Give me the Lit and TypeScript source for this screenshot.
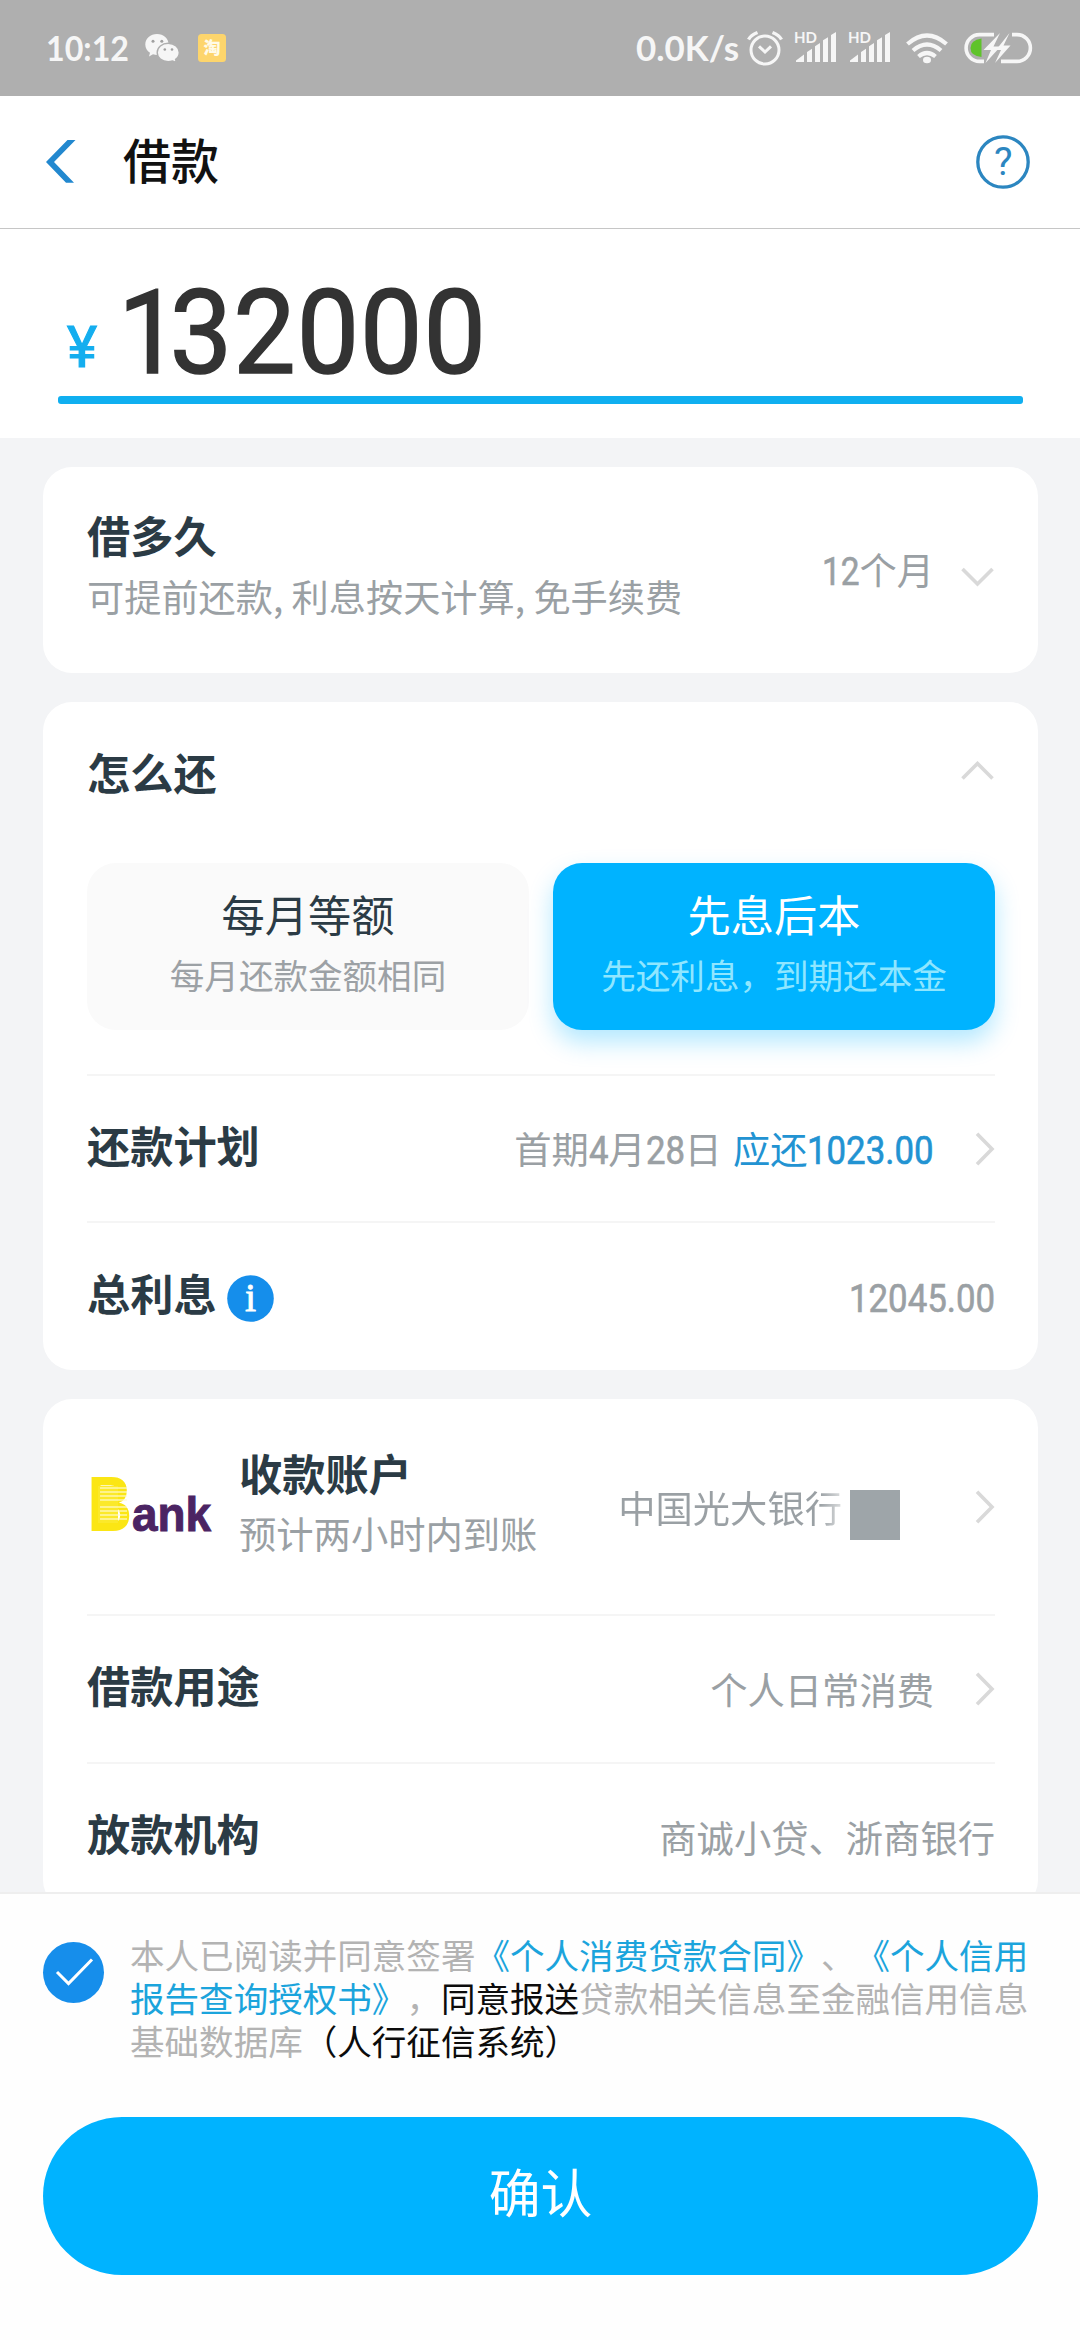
import { LitElement, html, svg, css } from "lit";
import { customElement, property } from "lit/decorators.js";

type Dir = "right" | "up" | "down";

@customElement("chevron-icon")
class ChevronIcon extends LitElement {
  @property() dir: Dir = "right";
  static styles = css`
    :host { display: block; flex: none; }
    svg { display: block; }
    path { fill: none; stroke: #d9d9d9; stroke-width: 3.6; }
  `;
  render() {
    if (this.dir === "right")
      return html`<svg width="20" height="34" viewBox="0 0 20 34"><path d="M2 1.8 L17 17 L2 32.2" /></svg>`;
    const d = this.dir === "down" ? "M1.5 2 L16.5 17 L31.5 2" : "M1.5 17.5 L16.5 2.5 L31.5 17.5";
    return html`<svg width="33" height="20" viewBox="0 0 33 20"><path d=${d} /></svg>`;
  }
}

/* Condensed figures that sit on the baseline of the surrounding text. */
@customElement("num-text")
class NumText extends LitElement {
  @property() value = "";
  @property({ type: Number }) size = 38;
  @property({ type: Number }) stretch = 0.915;
  static styles = css`
    :host { display: inline; }
    svg { display: inline-block; vertical-align: baseline; overflow: visible; }
    text {
      font-family: Roboto, "Liberation Sans", sans-serif; fill: currentColor;
      stroke: currentColor; stroke-width: 0.6;
    }
  `;
  render() {
    let em = 0;
    for (const c of this.value) em += c === "." ? 0.27 : 0.5615;
    const w = em * this.size * this.stretch;
    const h = Math.round(this.size * 0.711);
    return html`<svg width=${w} height=${h}>
      <text x="0" y=${h} font-size=${this.size}
        textLength=${w} lengthAdjust="spacingAndGlyphs">${this.value}</text></svg>`;
  }
}

@customElement("status-bar")
class StatusBar extends LitElement {
  static styles = css`
    :host {
      display: flex; height: 96px; box-sizing: border-box; padding: 0 46px 0 46px;
      background: #afafaf; align-items: center; justify-content: space-between;
    }
    .side { display: flex; align-items: center; }
    svg { display: block; flex: none; overflow: visible; }
    text { font-family: Lato, "Open Sans", sans-serif; fill: #f6f6f6; }
    .time { font-size: 35px; font-weight: 700; }
    .hd { font-size: 14.5px; font-weight: 700; }
    .tao { font-family: "Noto Sans CJK SC", sans-serif; font-size: 17px; font-weight: 900; fill: #fffbe8; }
    .fill { fill: #f6f6f6; }
    .line { fill: none; stroke: #f6f6f6; }
  `;
  signal() {
    return html`<svg width="54" height="96" viewBox="792 0 54 96">
      <text class="hd" x="794" y="42.5" textLength="23" lengthAdjust="spacingAndGlyphs">HD</text>
      <path class="fill" d="M796 62 V60.5 L804 54.5 V62Z M807 62 V52 L812 48.8 V62Z M815 62 V46.2 L820 43 V62Z
        M823 62 V40.3 L828 37.3 V62Z M831 62 V35 L836 32 V62Z" />
    </svg>`;
  }
  render() {
    return html`
      <div class="side">
        <svg width="98" height="96" viewBox="46 0 98 96">
          <text class="time" x="46" y="61" textLength="83" lengthAdjust="spacingAndGlyphs">10:12</text>
        </svg>
        <svg width="53" height="96" viewBox="144 0 53 96">
          <path class="fill" d="M157 34 C150.500 34 145.300 38.500 145.300 44.500 C145.300 48 147 50.800 150 52.800 L149 56.500
            L153 54.300 C154.500 54.800 155.700 55 157 55 C163.500 55 168.600 50.500 168.600 44.500 C168.600 38.500 163.500 34 157 34Z" />
          <path class="fill" stroke="#afafaf" stroke-width="1.4" d="M168.200 43.300 C174.400 43.300 179.300 47.300 179.300 52.600
            C179.300 55.500 177.800 57.800 175.600 59.400 L176.600 62.700 L172.600 61 C171.200 61.500 169.800 61.800 168.200 61.800
            C162 61.800 157.200 57.800 157.200 52.600 C157.200 47.300 162 43.300 168.200 43.300Z" />
          <g fill="#a0a0a0"><circle cx="153" cy="41.200" r="1.500" /><circle cx="161.800" cy="41.200" r="1.500" />
            <circle cx="164.800" cy="49.500" r="1.300" /><circle cx="172" cy="49.500" r="1.300" /></g>
        </svg>
        <svg width="30" height="96" viewBox="197 0 30 96">
          <rect x="198" y="34" width="28" height="28" rx="3.500" fill="#fdd56c" />
          <text class="tao" x="203.500" y="54">淘</text>
        </svg>
      </div>
      <div class="side">
        <svg width="108" height="96" viewBox="637 0 108 96">
          <text class="time" x="636" y="60.500" textLength="103" lengthAdjust="spacingAndGlyphs">0.0K/s</text>
        </svg>
        <svg width="47" height="96" viewBox="745 0 47 96">
          <circle class="line" cx="765" cy="50" r="14" stroke-width="3" />
          <path class="line" stroke-width="3" d="M759 46.300 L765 52 L771 46.300" />
          <path class="line" stroke-width="3.400" d="M748.500 39.500 Q751 35 757.500 32.500 M781.500 39.500 Q779 35 772.500 32.500" />
        </svg>
        ${this.signal()}${this.signal()}
        <svg width="134" height="96" viewBox="900 0 134 96">
          <g class="line" stroke-width="4.200">
            <path d="M907.500 44 Q927 27 946.500 44" /><path d="M913 50.500 Q927 38.500 941 50.500" />
            <path d="M918.500 56.500 Q927 49.500 935.500 56.500" />
          </g>
          <ellipse class="fill" cx="927" cy="60" rx="4" ry="3.200" />
          <path fill="#5fc32b" d="M981.500 38.500 V57 Q970.500 56 970.500 48 Q970.500 40 981.500 38.500Z" />
          <path class="line" stroke-width="3.600" d="M994 34.600 H979.500 A13.400 13.400 0 0 0 979.500 61.400 H984
            M1012 34.600 H1017 A13.400 13.400 0 0 1 1017 61.400 H1001" />
          <path class="fill" d="M1000 33 L983.500 50 H991 L985.500 63 L1000.500 46.500 H993.500Z" />
          <path class="fill" d="M1009.500 33 L996 50 H1001 L995 63 L1010.500 45.500 H1003.500Z" />
        </svg>
      </div>`;
  }
}

@customElement("bank-logo")
class BankLogo extends LitElement {
  static styles = css`
    :host { display: block; flex: none; width: 122px; }
    svg { display: block; overflow: visible; }
    text { font-family: "Liberation Sans", Arial, sans-serif; font-weight: 700; }
    .b { font-size: 77px; fill: #fbe614; }
    .ank { font-size: 49px; fill: #4b2463; stroke: #4b2463; stroke-width: 1; }
  `;
  render() {
    const lines = [10, 14, 18, 22, 29, 33, 37, 41];
    return html`<svg width="122" height="53" viewBox="0 0 122 53">
      <text class="b" x="-1.5" y="53" textLength="44.500" lengthAdjust="spacingAndGlyphs">B</text>
      <rect x="9" y="8" width="20" height="37" fill="#fbe92a" />
      ${lines.map((y) => svg`<path d=${`M11 ${y} H38`} stroke="#fffbd0" stroke-width="1.2" />`)}
      <text class="ank" x="43" y="53" textLength="79" lengthAdjust="spacingAndGlyphs">ank</text>
    </svg>`;
  }
}

@customElement("app-root")
class AppRoot extends LitElement {
  static styles = css`
    :host {
      display: flex; flex-direction: column; width: 1080px; height: 2340px; overflow: hidden;
      background: #f3f4f6; color: #2b3b45; text-spacing-trim: space-all;
      font-family: "Noto Sans CJK SC", "Noto Sans", sans-serif;
    }
    header {
      display: flex; align-items: center; height: 133px; flex: none; box-sizing: border-box;
      padding: 0 49px 0 45px; background: #fff; border-bottom: 1px solid #c6c6c6;
    }
    svg { display: block; flex: none; overflow: visible; }
    h1 { margin: -9px 0 0 47px; font-size: 48px; font-weight: 500; line-height: 70px; color: #111; flex: 1; }
    .q { font-family: Roboto, sans-serif; font-size: 39px; fill: #2c86c0; }

    .amount { height: 209px; flex: none; box-sizing: border-box; padding: 59px 57px 0 58px; background: #fff; }
    .figure { display: flex; align-items: flex-end; height: 108px; }
    .yen { margin: 0 13px 29px 9px; color: #14aeef; }
    .big { fill: #333; stroke: #333; stroke-width: 1.6; font-family: Roboto, sans-serif; font-size: 117px; }
    .yentext { fill: #14aeef; stroke: #14aeef; stroke-width: 1.2; font-family: Roboto, sans-serif; font-size: 57px; }
    .underline { height: 8px; border-radius: 3px; background: #10aff0; }

    main {
      height: 1454px; flex: none; box-sizing: border-box; overflow: hidden;
      padding: 29px 42px 0 43px; display: flex; flex-direction: column; gap: 29px;
    }
    .card { background: #fff; border-radius: 29px; padding: 0 43px 0 44px; flex: none; }
    .row { display: flex; align-items: center; justify-content: space-between; box-sizing: border-box; }
    .row + .row, .line { border-top: 2px solid #f5f5f5; }
    .label { font-size: 43.2px; font-weight: 700; line-height: 60px; color: #2b3b45; white-space: nowrap; }
    .note, .value { font-size: 37.3px; line-height: 48px; color: #9aa0a4; white-space: nowrap; font-weight: 400; }
    .note { margin-top: 7px; }
    .value { display: flex; align-items: center; }
    .value chevron-icon { margin-left: 41px; }
    .raise { margin-bottom: 10px; }
    .lift { margin-top: -1px; }

    .term { height: 206px; }
    .term .stack { margin-top: 4px; margin-bottom: 21px; }
    .term .note { margin-top: 8px; font-size: 37.2px; }
    .term .value { margin-top: -2px; }
    .term chevron-icon { margin: 16px 1px 0 27px; }
    .how { height: 137px; }
    .how chevron-icon { margin-right: 1px; }

    .options { display: grid; grid-template-columns: 442px 442px; justify-content: space-between; margin: 24px 0 44px; }
    .option {
      height: 167px; box-sizing: border-box; padding-top: 20px; border-radius: 29px;
      background: #fafafa; text-align: center;
    }
    .opt-title { font-size: 43.2px; line-height: 60px; }
    .opt-note { font-size: 34.56px; line-height: 44px; color: #9ca1a5; margin-top: 9px; }
    .chosen { background: #00b3ff; box-shadow: 0 12px 24px rgba(0, 179, 255, 0.3); }
    .chosen .opt-title { color: #fff; }
    .chosen .opt-note { color: #8fe6ff; }

    .plan { height: 147px; }
    .due { color: #2293d2; margin-left: 11px; }
    .interest { height: 149px; }
    .withinfo { display: flex; align-items: center; gap: 10px; }
    .withinfo .label { margin-bottom: 10px; }
    .withinfo svg { margin-top: 4px; }
    .info { font-family: "Liberation Serif", serif; font-size: 40px; fill: #fff; stroke: #fff; stroke-width: 0.8; text-anchor: middle; }

    .account { height: 215px; }
    .account .left { display: flex; align-items: center; gap: 28px; }
    .account .names { margin-bottom: 14px; }
    .account bank-logo { margin: -4px 0 0 2px; }
    .block { width: 50px; height: 50px; background: #9ea5a9; margin: 17px 34px 0 8px; }
    .fade { background: linear-gradient(90deg, #9aa0a4 90%, #dcdedf 100%); -webkit-background-clip: text; background-clip: text; color: transparent; }
    .usage { height: 148px; }
    .lender { height: 147px; }

    footer {
      flex: 1; box-sizing: border-box; padding: 41px 42px 0 43px; background: #fefefe;
      border-top: 2px solid #eeeeee;
    }
    .agree { display: flex; align-items: flex-start; height: 129px; }
    .agree svg { margin-top: 7px; }
    .terms {
      margin: 1px 0 0 26px; font-size: 34.56px; line-height: 43px; color: #b3b3b3; white-space: nowrap;
      font-family: Roboto, "Noto Sans CJK SC", sans-serif;
    }
    .link { color: #1ba4dc; }
    .dark { color: #0c0c0c; }
    .confirm {
      display: flex; align-items: center; justify-content: center; width: 995px; height: 158px; margin: 53px 0 0;
      border: 0; border-radius: 79px; background: #00b3ff; color: #fff; padding: 0 0 10px;
      font-family: inherit; font-size: 51.8px; line-height: 70px;
    }
  `;

  render() {
    return html`
      <status-bar></status-bar>
      <header>
        <svg width="31" height="44" viewBox="45 140 31 44">
          <path fill="#2288cf" d="M46 162 L67.500 140 H75.500 L54 162 L74 182.800 H66Z" />
        </svg>
        <h1>借款</h1>
        <svg width="56" height="56" viewBox="975 134 56 56">
          <circle cx="1003" cy="162" r="25.200" fill="none" stroke="#2c86c0" stroke-width="3.300" />
          <text class="q" x="994" y="175">?</text>
        </svg>
      </header>

      <section class="amount">
        <div class="figure">
          <svg class="yen" width="30" height="41">
            <text class="yentext" x="0" y="41" textLength="30" lengthAdjust="spacingAndGlyphs">¥</text>
          </svg>
          <svg width="380" height="108">
            <text class="big" transform="scale(0.95 1)" x="8.500 63 129.800 196.500 263.200 330" y="85">132000</text>
          </svg>
        </div>
        <div class="underline"></div>
      </section>

      <main>
        <section class="card">
          <div class="row term">
            <div class="stack">
              <div class="label">借多久</div>
              <div class="note">可提前还款, 利息按天计算, 免手续费</div>
            </div>
            <div class="value">
              <span><num-text value="12" stretch="0.88"></num-text>个月</span>
              <chevron-icon dir="down"></chevron-icon>
            </div>
          </div>
        </section>

        <section class="card">
          <div class="row how">
            <div class="label">怎么还</div>
            <chevron-icon dir="up"></chevron-icon>
          </div>
          <div class="options">
            <div class="option">
              <div class="opt-title">每月等额</div>
              <div class="opt-note">每月还款金额相同</div>
            </div>
            <div class="option chosen">
              <div class="opt-title">先息后本</div>
              <div class="opt-note">先还利息，到期还本金</div>
            </div>
          </div>
          <div class="row plan line">
            <div class="label raise">还款计划</div>
            <div class="value">
              <span class="lift">首期<num-text value="4"></num-text>月<num-text value="28"></num-text>日</span>
              <span class="due lift">应还<num-text value="1023.00"></num-text></span>
              <chevron-icon></chevron-icon>
            </div>
          </div>
          <div class="row interest">
            <div class="withinfo">
              <div class="label">总利息</div>
              <svg width="47" height="47" viewBox="0 0 47 47">
                <circle cx="23.500" cy="23.500" r="23.300" fill="#158eeb" />
                <text class="info" x="23.500" y="36">i</text>
              </svg>
            </div>
            <div class="value"><span class="lift"><num-text value="12045.00"></num-text></span></div>
          </div>
        </section>

        <section class="card">
          <div class="row account">
            <div class="left">
              <bank-logo></bank-logo>
              <div class="names">
                <div class="label">收款账户</div>
                <div class="note">预计两小时内到账</div>
              </div>
            </div>
            <div class="value">
              <span class="fade">中国光大银行</span>
              <div class="block"></div>
              <chevron-icon></chevron-icon>
            </div>
          </div>
          <div class="row usage">
            <div class="label raise">借款用途</div>
            <div class="value"><span>个人日常消费</span><chevron-icon></chevron-icon></div>
          </div>
          <div class="row lender">
            <div class="label raise">放款机构</div>
            <div class="value">商诚小贷、浙商银行</div>
          </div>
        </section>
      </main>

      <footer>
        <div class="agree">
          <svg width="61" height="61" viewBox="0 0 61 61">
            <circle cx="30.500" cy="30.500" r="30.500" fill="#168eeb" />
            <path d="M14 30 L25.500 41.500 L49 17.500" fill="none" stroke="#fff" stroke-width="3" />
          </svg>
          <p class="terms">本人已阅读并同意签署<span class="link">《个人消费贷款合同》</span>、<span class="link">《个人信用<br />报告查询授权书》</span>，<span class="dark">同意报送</span>贷款相关信息至金融信用信息<br />基础数据库<span class="dark">（人行征信系统）</span></p>
        </div>
        <button class="confirm">确认</button>
      </footer>
    `;
  }
}
